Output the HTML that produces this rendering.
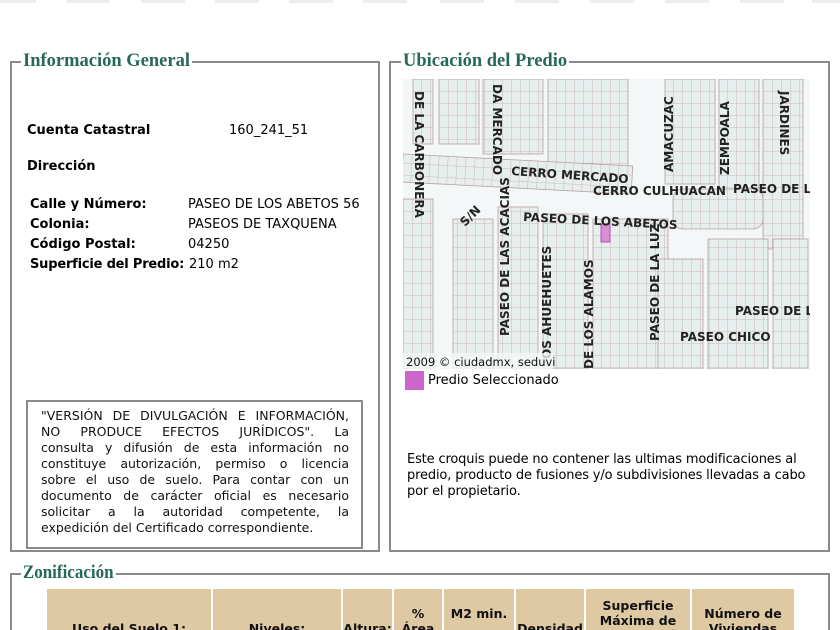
<!DOCTYPE html>
<html><head><meta charset="utf-8"><style>
html,body{margin:0;width:840px;height:630px;overflow:hidden}
body{background:#fff;font-family:"DejaVu Sans","Liberation Sans",sans-serif;color:#000;position:relative}
.a{position:absolute}
.fs{position:absolute;border:2px solid #8a8a8a;box-sizing:border-box}
.lg{position:absolute;background:#fff;font-family:"Liberation Serif",serif;font-weight:bold;color:#26685a;font-size:18.5px;padding:0 2px;line-height:20px}
.b{font-weight:bold;font-size:13px}
.t{font-size:13px}
.j div{text-align:justify;text-align-last:justify;height:16px;white-space:nowrap}
.j div.l{text-align-last:left}
.tab{position:absolute;top:0;height:3px;background:#eee;width:44px}
th{background:#dfc9a3;font-weight:bold;font-size:12.5px;color:#111;border:0;padding:0;line-height:15px}
.m{font-family:"DejaVu Sans",sans-serif;font-weight:bold;font-size:12px;fill:#222}
</style></head><body>
<div class="tab" style="left:0;width:36px"></div><div class="tab" style="left:66px"></div><div class="tab" style="left:141px"></div><div class="tab" style="left:215px"></div><div class="tab" style="left:289px"></div><div class="tab" style="left:363px"></div><div class="tab" style="left:440px"></div><div class="tab" style="left:515px"></div><div class="tab" style="left:590px"></div><div class="tab" style="left:665px"></div><div class="tab" style="left:740px"></div><div class="tab" style="left:812px"></div>

<div class="fs" style="left:10px;top:61px;width:370px;height:491px"></div>
<div class="lg" style="left:21px;top:51px">Información General</div>
<div class="fs" style="left:389px;top:61px;width:441px;height:491px"></div>
<div class="lg" style="left:401px;top:51px">Ubicación del Predio</div>
<div class="fs" style="left:10px;top:573px;width:820px;height:100px"></div>
<div class="lg" style="left:21px;top:563px;transform:scaleX(0.92);transform-origin:left">Zonificación</div>

<div class="a b" style="left:27px;top:123px">Cuenta Catastral</div>
<div class="a t" style="left:229px;top:123px">160_241_51</div>
<div class="a b" style="left:27px;top:159px">Dirección</div>
<div class="a b" style="left:30px;top:197px">Calle y Número:</div><div class="a t" style="left:188px;top:197px">PASEO DE LOS ABETOS 56</div>
<div class="a b" style="left:30px;top:217px">Colonia:</div><div class="a t" style="left:188px;top:217px">PASEOS DE TAXQUENA</div>
<div class="a b" style="left:30px;top:237px">Código Postal:</div><div class="a t" style="left:188px;top:237px">04250</div>
<div class="a b" style="left:30px;top:257px;letter-spacing:-0.2px">Superficie del Predio:</div><div class="a t" style="left:189px;top:257px">210 m2</div>

<div class="a" style="left:26px;top:400px;width:337px;height:149px;border:2px solid #8a8a8a;box-sizing:border-box"></div>
<div class="a t j" style="left:41px;top:408px;width:308px;font-size:12.5px;line-height:16px;color:#111">
<div>"VERSIÓN DE DIVULGACIÓN E INFORMACIÓN,</div>
<div>NO PRODUCE EFECTOS JURÍDICOS". La</div>
<div>consulta y difusión de esta información no</div>
<div>constituye autorización, permiso o licencia</div>
<div>sobre el uso de suelo. Para contar con un</div>
<div>documento de carácter oficial es necesario</div>
<div>solicitar a la autoridad competente, la</div>
<div class="l">expedición del Certificado correspondiente.</div>
</div>

<svg class="a" style="left:403px;top:79px" width="407" height="290">
<defs><pattern id="p" width="9" height="12" patternUnits="userSpaceOnUse"><rect width="9" height="12" fill="#e6eeee"/><path d="M0 0V12M0 0H9" stroke="#c9a9a9" stroke-width="0.8"/></pattern></defs>
<rect width="407" height="290" fill="#f4f7f7"/>
<g fill="url(#p)" stroke="#b9a0a0" stroke-width="0.8">
<rect x="10" y="0" width="20" height="65"/><rect x="36" y="0" width="40" height="65"/><rect x="80" y="0" width="60" height="75"/><rect x="145" y="0" width="80" height="105"/>
<rect x="262" y="0" width="50" height="105"/><rect x="316" y="0" width="40" height="110"/><rect x="360" y="0" width="40" height="170"/>
<rect x="0" y="75" width="230" height="28" transform="rotate(3 0 75)"/>
<rect x="0" y="120" width="30" height="170"/><rect x="50" y="140" width="40" height="150"/>
<rect x="95" y="128" width="40" height="162"/><rect x="140" y="135" width="45" height="155"/><rect x="190" y="140" width="75" height="150"/>
<rect x="370" y="160" width="35" height="130"/><rect x="305" y="160" width="60" height="130"/><rect x="255" y="180" width="45" height="110"/>
<rect x="270" y="110" width="90" height="40" rx="10"/>
</g>
<rect x="198" y="145" width="9" height="18" fill="#d98fd4" stroke="#b050b0"/>
<text class="m" transform="translate(12,12) rotate(90)">DE LA CARBONERA</text>
<text class="m" transform="translate(90,5) rotate(90)">DA MERCADO</text>
<text class="m" x="108" y="96" transform="rotate(4 108 96)">CERRO MERCADO</text>
<text class="m" x="190" y="116">CERRO CULHUACAN</text>
<text class="m" x="330" y="114">PASEO DE LO</text>
<text class="m" x="120" y="142" transform="rotate(3 120 142)">PASEO DE LOS ABETOS</text>
<text class="m" transform="translate(270,93) rotate(-90)">AMACUZAC</text>
<text class="m" transform="translate(326,96) rotate(-90)">ZEMPOALA</text>
<text class="m" transform="translate(377,12) rotate(90)">JARDINES</text>
<text class="m" transform="translate(106,257) rotate(-90)">PASEO DE LAS ACACIAS</text>
<text class="m" transform="translate(148,280) rotate(-90)">OS AHUEHUETES</text>
<text class="m" transform="translate(190,290) rotate(-90)">DE LOS ALAMOS</text>
<text class="m" transform="translate(256,262) rotate(-90)">PASEO DE LA LUZ</text>
<text class="m" x="332" y="236">PASEO DE LO</text>
<text class="m" x="277" y="262">PASEO CHICO</text>
<text class="m" transform="translate(62,148) rotate(-45)">S/N</text>
<rect x="0" y="274" width="150" height="16" fill="#f4f7f7" opacity=".8"/>
<text x="3" y="287" font-size="11.5" fill="#111" font-family="DejaVu Sans">2009 © ciudadmx, seduvi</text>
</svg>
<div class="a" style="left:405px;top:371px;width:19px;height:19px;background:#cc66cc"></div>
<div class="a t" style="left:428px;top:373px">Predio Seleccionado</div>
<div class="a t" style="left:407px;top:452px;width:418px;font-size:13px;line-height:16px;letter-spacing:-0.15px">Este croquis puede no contener las ultimas modificaciones al predio, producto de fusiones y/o subdivisiones llevadas a cabo por el propietario.</div>

<table class="a" style="left:45px;top:589px;width:751px;border-collapse:separate;border-spacing:2px 0;height:78px;text-align:center">
<tr><th style="width:164px">Uso del Suelo 1:</th><th style="width:128px">Niveles:</th><th style="width:49px">Altura:</th><th style="width:48px">%<br>Área<br>&nbsp;</th><th style="width:70px">M2 min.<br>&nbsp;<br>&nbsp;</th><th style="width:68px">Densidad</th><th style="width:104px">Superficie<br>Máxima de<br>Construcción<br>&nbsp;</th><th>Número de<br>Viviendas<br>&nbsp;</th></tr>
</table>
</body></html>
